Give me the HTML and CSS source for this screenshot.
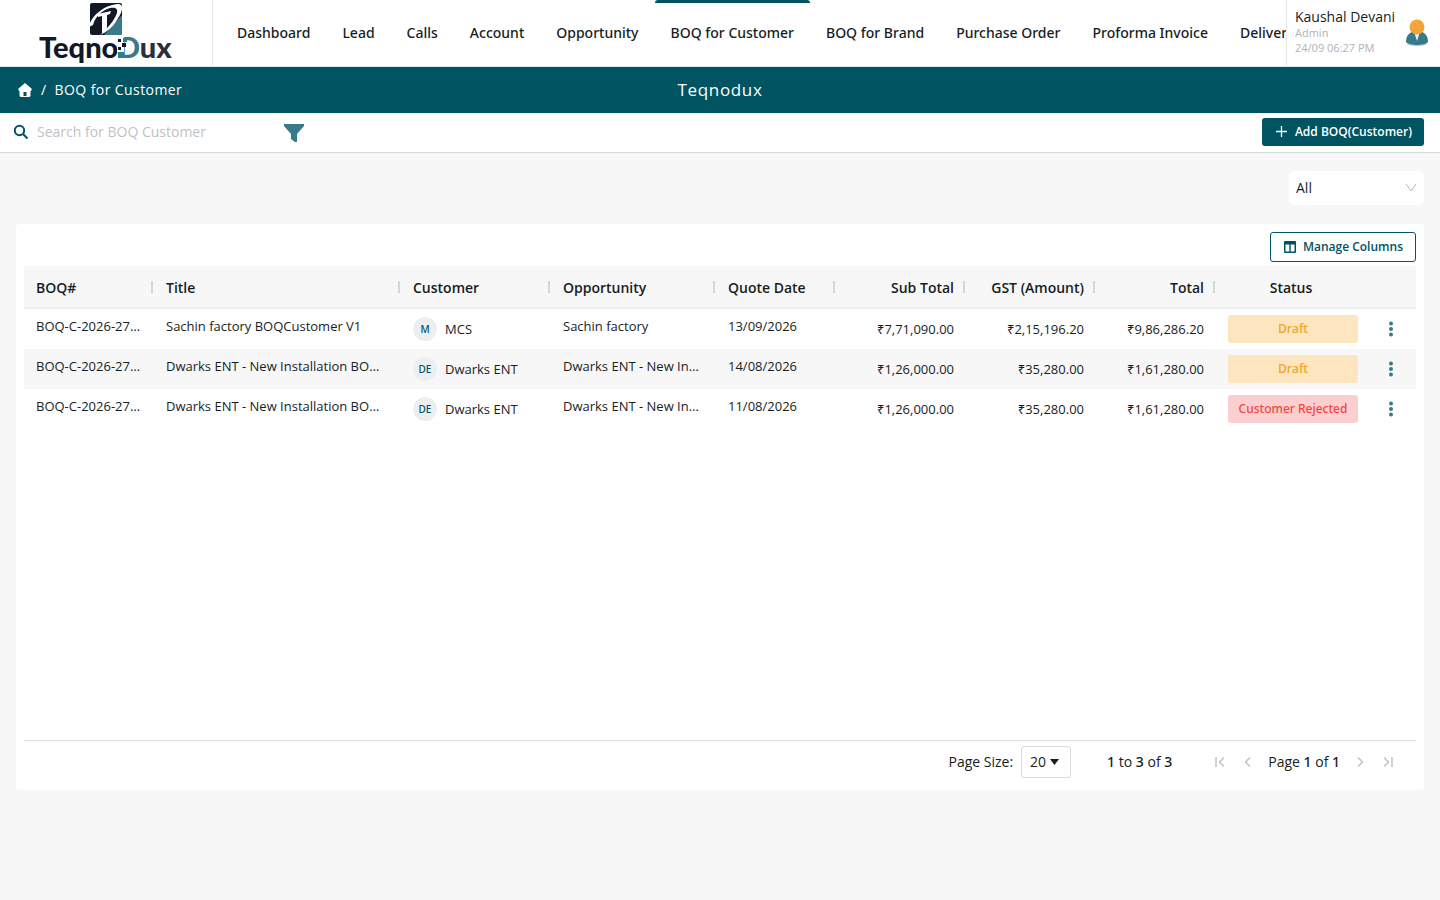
FILE: index.html
```html
<!DOCTYPE html>
<html lang="en">
<head>
    <meta charset="UTF-8">
    <meta name="viewport" content="width=device-width, initial-scale=1.0">
    <title>BOQ for Customer - Teqnodux</title>
    <link rel="stylesheet" href="styles.css">
</head>
<body>
    <header class="header">
        <a href="#" class="logo">
            <svg width="136" height="64" viewBox="0 0 136 64" role="img" aria-label="TeqnoDux">
                <rect x="52" y="3" width="32" height="32" rx="2" fill="#121826"/>
                <path d="M66 35 L84 15 V33 Q84 35 82 35 Z" fill="#38798b"/>
                <path d="M60 14 L73 11 L72 14 L69 15 V30 L64 33 V16 L60 17 Z" fill="#fff"/>
                <path d="M51 27 C53 15 67 5 80 4 C87 4 84 13 79 20 C75 27 69 32 62 35 C69 29 76 21 79 13 C80 8 77 7 72 8 C64 10 57 17 55 25 Z" fill="#fff"/>
                <text x="1" y="58" class="logo-text" fill="#121826">Teqno<tspan fill="#38798b">D</tspan><tspan fill="#2b2f36">ux</tspan></text>
                <path d="M79 37h7v15h-7z" fill="#fff"/>
                <path d="M80 39h3v3h-3zM84 43h4v4h-4zM80 47h3v3h-3z" fill="#121826"/>
                <path d="M85 38h4v4h-4zM80 52h6v6h-6z" fill="#38798b"/>
            </svg>
        </a>
        <nav class="nav">
            <a href="#">Dashboard</a>
            <a href="#">Lead</a>
            <a href="#">Calls</a>
            <a href="#">Account</a>
            <a href="#">Opportunity</a>
            <a href="#" class="active">BOQ for Customer</a>
            <a href="#">BOQ for Brand</a>
            <a href="#">Purchase Order</a>
            <a href="#">Proforma Invoice</a>
            <a href="#">Delivery</a>
        </nav>
        <div class="user">
            <div class="user-info">
                <span class="user-name">Kaushal Devani</span>
                <span class="user-meta">Admin</span>
                <span class="user-meta">24/09 06:27 PM</span>
            </div>
            <svg width="24" height="30" viewBox="0 0 24 30" aria-hidden="true">
                <ellipse cx="12" cy="27" rx="10" ry="2" fill="#c9ced2"/>
                <path d="M1 25 C1 18 5 14 12 14 C19 14 23 18 23 25 C20 29 4 29 1 25 Z" fill="#38798b"/>
                <path d="M9 15 L12 24 L15 15 Z" fill="#e8edf0"/>
                <circle cx="12" cy="10" r="7.500" fill="#f2a52e"/>
                <circle cx="10" cy="8" r="3" fill="none" stroke="#f9a08c" stroke-width="2" stroke-dasharray="1 1"/>
            </svg>
        </div>
    </header>

    <div class="title-bar">
        <div class="breadcrumb">
            <a href="#" aria-label="Home">
                <svg width="16" height="16" viewBox="0 0 16 16"><path d="M8 1 L15 7 L14 9 H13.500 V13.500 Q13.500 15 12 15 H4 Q2.500 15 2.500 13.500 V9 H2 L1 7 Z" fill="#fff"/><path d="M6.500 14 V10 h3 V14 Z" fill="#005461"/></svg>
            </a>
            <span>/</span>
            <span>BOQ for Customer</span>
        </div>
        <h1>Teqnodux</h1>
    </div>

    <div class="toolbar">
        <label class="search">
            <svg width="16" height="16" viewBox="0 0 16 16" aria-hidden="true"><circle cx="6.500" cy="6.500" r="4.700" fill="none" stroke="#005461" stroke-width="2"/><path d="M10 10 L14.500 14.500" stroke="#005461" stroke-width="2"/></svg>
            <input type="text" placeholder="Search for BOQ Customer" aria-label="Search for BOQ Customer">
        </label>
        <button type="button" class="filter-btn" aria-label="Filter">
            <svg width="20" height="18" viewBox="0 0 20 18"><path d="M0 0 H20 V2 L13 10 V18 H11 L7 15 V10 L0 2 Z" fill="#38798b"/></svg>
        </button>
        <button type="button" class="btn btn-primary">
            <svg width="15" height="15" viewBox="0 0 15 15" aria-hidden="true"><path d="M7.500 2 V13 M2 7.500 H13" stroke="#fff" stroke-width="1.300"/></svg>
            Add BOQ(Customer)
        </button>
    </div>

    <main class="content">
        <div class="status-filter">
            <select aria-label="Status">
                <option>All</option>
            </select>
            <svg width="12" height="12" viewBox="0 0 12 12" aria-hidden="true"><path d="M1 2 L6 9 L11 2" fill="none" stroke="#b5b8bc"/></svg>
        </div>

        <section class="card">
            <div class="card-head">
                <button type="button" class="btn btn-outline">
                    <svg width="14" height="14" viewBox="0 0 14 14" aria-hidden="true"><path fill-rule="evenodd" d="M2 1 H12 Q13 1 13 2 V12 Q13 13 12 13 H2 Q1 13 1 12 V2 Q1 1 2 1 Z M2.500 4.500 V11.500 H6.300 V4.500 Z M7.700 4.500 V11.500 H11.500 V4.500 Z" fill="#005461"/></svg>
                    Manage Columns
                </button>
            </div>

            <div class="grid">
                <table>
                    <colgroup>
                        <col class="w-130">
                        <col>
                        <col class="w-150">
                        <col class="w-165">
                        <col class="w-120">
                        <col class="w-130">
                        <col class="w-130">
                        <col class="w-120">
                        <col class="w-150">
                        <col class="w-50">
                    </colgroup>
                    <thead>
                        <tr>
                            <th>BOQ#</th>
                            <th>Title</th>
                            <th>Customer</th>
                            <th>Opportunity</th>
                            <th>Quote Date</th>
                            <th class="num">Sub Total</th>
                            <th class="num">GST (Amount)</th>
                            <th class="num">Total</th>
                            <th class="center">Status</th>
                            <th class="center"></th>
                        </tr>
                    </thead>
                    <tbody>
                        <tr>
                            <td>BOQ-C-2026-27/0003</td>
                            <td>Sachin factory BOQCustomer V1</td>
                            <td class="mid"><div class="customer"><span class="avatar">M</span>MCS</div></td>
                            <td>Sachin factory</td>
                            <td>13/09/2026</td>
                            <td class="num">₹7,71,090.00</td>
                            <td class="num">₹2,15,196.20</td>
                            <td class="num">₹9,86,286.20</td>
                            <td class="status"><span class="tag draft">Draft</span></td>
                            <td class="actions"><button type="button" aria-label="More actions"><svg width="4" height="16" viewBox="0 0 4 16"><path d="M2 2.500h0M2 8h0M2 13.500h0"/></svg></button></td>
                        </tr>
                        <tr>
                            <td>BOQ-C-2026-27/0002</td>
                            <td>Dwarks ENT - New Installation BOQCustomer V2</td>
                            <td class="mid"><div class="customer"><span class="avatar">DE</span>Dwarks ENT</div></td>
                            <td>Dwarks ENT - New Installation</td>
                            <td>14/08/2026</td>
                            <td class="num">₹1,26,000.00</td>
                            <td class="num">₹35,280.00</td>
                            <td class="num">₹1,61,280.00</td>
                            <td class="status"><span class="tag draft">Draft</span></td>
                            <td class="actions"><button type="button" aria-label="More actions"><svg width="4" height="16" viewBox="0 0 4 16"><path d="M2 2.500h0M2 8h0M2 13.500h0"/></svg></button></td>
                        </tr>
                        <tr>
                            <td>BOQ-C-2026-27/0001</td>
                            <td>Dwarks ENT - New Installation BOQCustomer V1</td>
                            <td class="mid"><div class="customer"><span class="avatar">DE</span>Dwarks ENT</div></td>
                            <td>Dwarks ENT - New Installation</td>
                            <td>11/08/2026</td>
                            <td class="num">₹1,26,000.00</td>
                            <td class="num">₹35,280.00</td>
                            <td class="num">₹1,61,280.00</td>
                            <td class="status"><span class="tag rejected">Customer Rejected</span></td>
                            <td class="actions"><button type="button" aria-label="More actions"><svg width="4" height="16" viewBox="0 0 4 16"><path d="M2 2.500h0M2 8h0M2 13.500h0"/></svg></button></td>
                        </tr>
                    </tbody>
                </table>

                <div class="pager">
                    <label for="page-size">Page Size:</label>
                    <div class="page-size">
                        <select id="page-size">
                            <option>20</option>
                        </select>
                        <svg width="9" height="6" viewBox="0 0 9 6" aria-hidden="true"><path d="M0 0 H9 L4.500 6 Z" fill="#181d1f"/></svg>
                    </div>
                    <span class="range"><b>1</b> to <b>3</b> of <b>3</b></span>
                    <div class="pages">
                        <button type="button" aria-label="First page" disabled><svg width="16" height="16" viewBox="0 0 16 16"><path d="M4 3 V13 M12 3.500 L7.500 8 L12 12.500"/></svg></button>
                        <button type="button" aria-label="Previous page" disabled><svg width="16" height="16" viewBox="0 0 16 16"><path d="M10 3.500 L5.500 8 L10 12.500"/></svg></button>
                        <span>Page <b>1</b> of <b>1</b></span>
                        <button type="button" aria-label="Next page" disabled><svg width="16" height="16" viewBox="0 0 16 16"><path d="M6 3.500 L10.500 8 L6 12.500"/></svg></button>
                        <button type="button" aria-label="Last page" disabled><svg width="16" height="16" viewBox="0 0 16 16"><path d="M4 3.500 L8.500 8 L4 12.500 M12 3 V13"/></svg></button>
                    </div>
                </div>
            </div>
        </section>
    </main>
</body>
</html>
```
FILE: styles.css
```css
* {
    box-sizing: border-box;
}
body {
    margin: 0;
    font-family: "Open Sans", "Noto Sans", sans-serif;
    font-size: 14px;
    line-height: 20px;
    color: #181d1f;
    background-color: #f7f7f7;
}
button, input, select {
    font: inherit;
    color: inherit;
}
button {
    padding: 0;
    border: 0;
    background: none;
    cursor: pointer;
}
a {
    color: inherit;
    text-decoration: none;
}
svg {
    display: block;
    flex: none;
}
/* Open Sans has no medium weight here */
.nav, .avatar, .rejected, .pager b {
    font-family: "Noto Sans", sans-serif;
    font-weight: 500;
}

/* header */
.header {
    display: flex;
    height: 67px;
    background-color: white;
    border-bottom: 1px solid #e4e7e9;
}
.logo {
    flex: none;
    width: 213px;
    display: flex;
    justify-content: center;
    border-right: 1px solid #e4e7e9;
}
.logo-text {
    font-family: Lato, sans-serif;
    font-size: 29px;
    font-weight: 900;
}
.nav {
    flex: 1;
    min-width: 0;
    display: flex;
    overflow: hidden;
    padding-left: 8px;
}
.nav a {
    flex: none;
    padding: 17px 16px 0;
    line-height: 26px;
    white-space: nowrap;
    border-top: 3px solid transparent;
}
.nav a.active {
    border-color: #005461;
    border-radius: 3px 3px 0 0;
}
.user {
    flex: none;
    display: flex;
    align-items: center;
    justify-content: space-between;
    width: 154px;
    padding: 0 11px 3px 8px;
    border-left: 1px solid #e4e7e9;
}
.user-info {
    display: flex;
    flex-direction: column;
}
.user-name {
    line-height: 17px;
}
.user-meta {
    font-size: 11px;
    line-height: 15px;
    color: #b0b3b6;
}

/* page title */
.title-bar {
    display: grid;
    grid-template-columns: 1fr auto 1fr;
    align-items: center;
    height: 46px;
    padding: 0 17px;
    color: white;
    background-color: #005461;
}
.breadcrumb {
    display: flex;
    align-items: center;
    gap: 8px;
    letter-spacing: 0.03em;
}
.title-bar h1 {
    margin: 0;
    font-size: 17px;
    font-weight: 400;
    letter-spacing: 0.04em;
}

/* toolbar */
.toolbar {
    display: flex;
    align-items: center;
    height: 40px;
    padding: 0 16px 2px 13px;
    background-color: white;
    border-bottom: 1px solid #d5d7d9;
}
.search {
    display: flex;
    align-items: center;
    gap: 8px;
    width: 271px;
}
.search input {
    flex: 1;
    min-width: 0;
    padding: 0;
    border: 0;
    outline: 0;
    background: none;
}
.search input::placeholder {
    color: #bfc2c4;
}
.filter-btn {
    padding-top: 2px;
}
.btn {
    display: flex;
    align-items: center;
    gap: 6px;
    padding: 0 12px;
    font-size: 12px;
    font-weight: 600;
    border-radius: 3px;
}
.btn-primary {
    height: 28px;
    margin-left: auto;
    color: white;
    background-color: #005461;
}
.btn-outline {
    height: 30px;
    color: #005461;
    background-color: white;
    border: 1px solid #005461;
}

/* content */
.content {
    padding: 18px 16px;
}
.status-filter {
    position: relative;
    width: 135px;
    margin: 0 0 19px auto;
}
.status-filter select {
    display: block;
    width: 100%;
    height: 34px;
    padding: 0 7px;
    border: 0;
    border-radius: 5px;
    background-color: white;
    appearance: none;
}
.status-filter svg {
    position: absolute;
    top: 11px;
    right: 7px;
    pointer-events: none;
}
.card {
    padding: 8px;
    background-color: white;
    border-radius: 4px;
}
.card-head {
    display: flex;
    justify-content: flex-end;
    margin-bottom: 4px;
}
.grid {
    display: flex;
    flex-direction: column;
    min-height: 516px;
}

/* table */
table {
    width: 100%;
    table-layout: fixed;
    border-collapse: separate;
    border-spacing: 0;
}
.w-50 {
    width: 50px;
}
.w-120 {
    width: 120px;
}
.w-130 {
    width: 130px;
}
.w-150 {
    width: 150px;
}
.w-165 {
    width: 165px;
}
th {
    height: 43px;
    padding: 2px 12px 0;
    font-weight: 600;
    text-align: left;
    white-space: nowrap;
    border-bottom: 2px solid #eff0f1;
    background: linear-gradient(#d3d7da, #d3d7da) right 1px center / 2px 12px no-repeat #f7f7f7;
}
th.center {
    text-align: center;
    background: #f7f7f7;
}
td {
    height: 40px;
    padding: 0 12px;
    font-size: 13px;
    line-height: 34px;
    vertical-align: top;
    white-space: nowrap;
    overflow: hidden;
    text-overflow: ellipsis;
}
tbody tr:nth-child(even) {
    background-color: #f7f7f7;
}
.num {
    text-align: right;
}
td.num, td.mid {
    line-height: 40px;
}
.customer {
    display: flex;
    align-items: center;
    gap: 8px;
}
.avatar {
    width: 24px;
    height: 24px;
    font-size: 10px;
    line-height: 24px;
    text-align: center;
    color: #005461;
    background-color: #ebeff2;
    border-radius: 50%;
}
td.status {
    padding: 6px 8px 6px 12px;
}
.tag {
    display: block;
    font-size: 12px;
    line-height: 28px;
    text-align: center;
    border-radius: 3px;
}
.draft {
    font-weight: 600;
    color: #f2a52e;
    background-color: #fde5c0;
}
.rejected {
    color: #f5453f;
    background-color: #fbcfcf;
}
td.actions {
    padding: 6px 12px;
}
.actions button {
    display: flex;
    align-items: center;
    justify-content: center;
    width: 26px;
    height: 28px;
}
.actions path {
    stroke: #38798b;
    stroke-width: 4;
    stroke-linecap: round;
}

/* pager */
.pager {
    display: flex;
    align-items: center;
    justify-content: flex-end;
    height: 42px;
    margin-top: auto;
    padding-right: 20px;
    border-top: 1px solid #dddfe0;
}
.page-size {
    position: relative;
    margin: 0 36px 0 8px;
}
.page-size select {
    display: block;
    width: 50px;
    height: 32px;
    padding: 0 8px;
    border: 1px solid #d8dadc;
    border-radius: 3px;
    background-color: white;
    appearance: none;
}
.page-size svg {
    position: absolute;
    top: 13px;
    right: 12px;
    pointer-events: none;
}
.range {
    margin-right: 40px;
}
.pages {
    display: flex;
    align-items: center;
    gap: 12px;
}
.pages path {
    fill: none;
    stroke: #bfc2c4;
    stroke-width: 1.5;
}
```
